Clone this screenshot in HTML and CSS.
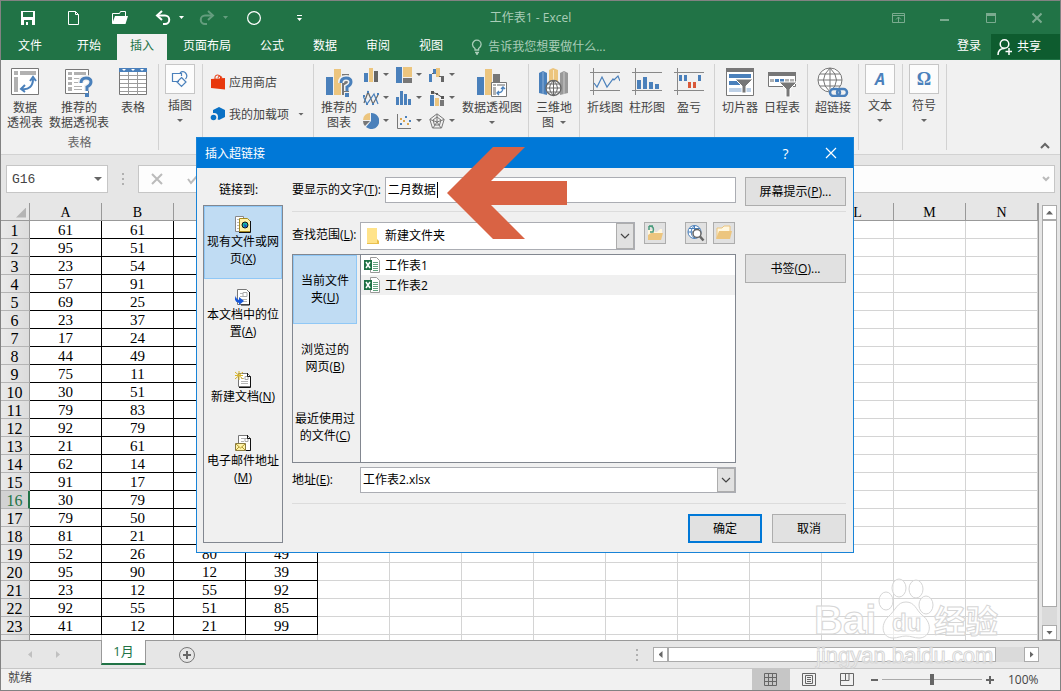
FILE: index.html
```html
<!DOCTYPE html>
<html lang="zh-CN">
<head>
    <meta charset="UTF-8">
    <meta name="viewport" content="width=device-width, initial-scale=1.0">
    <title>工作表1 - Excel</title>
    <link rel="stylesheet" href="styles.css">
</head>
<body>
    <div class="app">
        <header class="header">
            <div class="titlebar">
                <div class="quick">
                    <button class="quick-btn" aria-label="保存"><svg width="16" height="16" viewBox="0 0 16 16"><path d="M1 1h14v14H1z" fill="#fff"/><path d="M3 2h10v5H3zM4 10h8v5H4z" fill="#217346"/><path d="M6 12h2v3H6z" fill="#fff"/></svg></button>
                    <button class="quick-btn" aria-label="新建"><svg width="16" height="16" viewBox="0 0 16 16"><path d="M2.500 1.500h7l3 3v10h-10zM9.500 1.500v3h3" fill="none" stroke="#fff"/></svg></button>
                    <button class="quick-btn" aria-label="打开"><svg width="16" height="16" viewBox="0 0 16 16"><path d="M.5 13V3.500h7l1-2h5v5" fill="none" stroke="#fff"/><path d="M3 6h13l-2.500 8H0z" fill="#fff"/></svg></button>
                    <div class="history">
                        <button aria-label="撤销"><svg width="32" height="16" viewBox="0 0 32 16"><path d="M3 5.500h7a4.200 4.200 0 0 1 0 8.500H8" fill="none" stroke="#fff" stroke-width="2"/><path d="M7 1L2 5.500 7 10" fill="none" stroke="#fff" stroke-width="2"/><path d="M24 6h5l-2.500 3z" fill="#fff"/></svg></button>
                        <button class="dim" aria-label="恢复"><svg width="32" height="16" viewBox="0 0 32 16"><path d="M13 5.500H6A4.200 4.200 0 0 0 6 14h2" fill="none" stroke="#fff" stroke-width="2"/><path d="M9 1l5 4.500L9 10" fill="none" stroke="#fff" stroke-width="2"/><path d="M24 6h5l-2.500 3z" fill="#fff"/></svg></button>
                    </div>
                    <button class="quick-btn" aria-label="录制"><svg width="16" height="16" viewBox="0 0 16 16"><circle cx="8" cy="8" r="6.400" fill="none" stroke="#fff" stroke-width="1.200"/></svg></button>
                    <button class="quick-btn" aria-label="自定义"><svg width="16" height="16" viewBox="0 0 16 16"><path d="M5 5h5v1H5zM5 8h5l-2.500 3z" fill="#fff"/></svg></button>
                </div>
                <h1 class="title">工作表1 - Excel</h1>
                <div class="controls">
                    <button aria-label="功能区选项"><svg width="14" height="12" viewBox="0 0 14 12"><path d="M.5 1.500h12v9H.5zM1 3.500h12M6.500 10V5M4 7.500L6.500 5 9 7.500" fill="none" stroke="#7aab8f"/></svg></button>
                    <button aria-label="最小化"><svg width="10" height="12" viewBox="0 0 10 12"><path d="M0 7h9v2H0z" fill="#7aab8f"/></svg></button>
                    <button aria-label="最大化"><svg width="10" height="12" viewBox="0 0 10 12"><path d="M.5 1.500h9v9h-9z" fill="none" stroke="#7aab8f"/><path d="M0 1h10v3H0z" fill="#7aab8f"/></svg></button>
                    <button aria-label="关闭"><svg width="10" height="12" viewBox="0 0 10 12"><path d="M.5 1.500l9 9M9.500 1.500l-9 9" stroke="#7aab8f" stroke-width="2"/></svg></button>
                </div>
            </div>
            <nav class="tabs">
                <a class="tab file" href="#">文件</a>
                <a class="tab" href="#">开始</a>
                <a class="tab active" href="#">插入</a>
                <a class="tab" href="#">页面布局</a>
                <a class="tab" href="#">公式</a>
                <a class="tab" href="#">数据</a>
                <a class="tab" href="#">审阅</a>
                <a class="tab" href="#">视图</a>
                <a class="tell" href="#"><svg width="12" height="16" viewBox="0 0 12 16"><path d="M4 11V9.500C2.500 8.500 1.500 7.200 1.500 5.500a4.300 4.300 0 0 1 8.600 0c0 1.700-1 3-2.500 4V11zM4 13.500h4M5 15h2" fill="none" stroke="#a9cdb8" stroke-width="1.300"/></svg>告诉我您想要做什么...</a>
                <a class="login" href="#">登录</a>
                <button class="share"><svg width="16" height="18" viewBox="0 0 16 18"><circle cx="7.500" cy="6" r="4.300" fill="none" stroke="#fff" stroke-width="1.500"/><path d="M1 17c0-4 2.500-6.500 6.500-6.500M8.500 13.500H15M12 10v7" fill="none" stroke="#fff" stroke-width="1.500"/></svg>共享</button>
            </nav>
        </header>

        <div class="ribbon">
            <div class="group g-tables">
                <div class="group-items">
                    <button class="big"><svg width="28" height="30" viewBox="0 0 28 30"><path d="M.5 1.500h27v26H.5z" fill="#fff" stroke="#777"/><path d="M3 4h4v4H3zM9 4h16v4H9zM3 10h4v15H3z" fill="#b1b1b1"/><path d="M11 22c7 1 11-3 11-10M19 14l3-4 3 4M14 18l-4 4 4 3" fill="none" stroke="#4a80bb" stroke-width="2"/></svg>数据<br>透视表</button>
                    <button class="big wide"><svg width="28" height="30" viewBox="0 0 28 30"><path d="M.5 2.500h23v24H.5z" fill="#fff" stroke="#777"/><path d="M3 5h4v3H3zM9 5h12v3H9zM3 10h4v3H3zM3 15h4v3H3zM3 20h4v4H3zM9 11h9v1H9zM9 15h7v1H9zM9 19h8v1H9zM9 22h8v1H9z" fill="#b1b1b1"/><path d="M16 16q0-5 5-5t5 4q0 3-4 5v4" fill="none" stroke="#f1f1f1" stroke-width="6"/><path d="M16 16q0-5 5-5t5 4q0 3-4 5v4" fill="none" stroke="#4a80bb" stroke-width="3"/><path d="M20 26h4v4h-4z" fill="#4a80bb"/></svg>推荐的<br>数据透视表</button>
                    <button class="big"><svg width="28" height="30" viewBox="0 0 28 30"><path d="M.5 1.500h27v26H.5z" fill="#fff" stroke="#777"/><path d="M0 1h28v4H0z" fill="#4a80bb"/><path d="M3 2h4l-2 2zM12 2h4l-2 2zM21 2h4l-2 2z" fill="#fff"/><path d="M1 8.500h26M1 12.500h26M1 16.500h26M1 20.500h26M1 24.500h26M9.500 5v23M18.500 5v23" stroke="#9b9b9b"/></svg>表格</button>
                </div>
                <div class="group-name">表格</div>
            </div>
            <div class="group g-one">
                <button class="boxed"><span class="box"><svg width="18" height="18" viewBox="0 0 18 18"><path d="M8 11.500H1.500v-8h9V6M9 3c4-4 9 2 5.500 6M10.500 7.500L15 12l-4.500 4.500L6 12z" fill="none" stroke="#4a80bb" stroke-width="1.200"/></svg></span>插图<i class="caret"></i></button>
            </div>
            <div class="group g-addins">
                <button class="row-btn"><svg width="16" height="16" viewBox="0 0 16 16"><path d="M1 5l14-1v11.500L1 14z" fill="#e8380d"/><path d="M5 7V3q0-2 2.500-2t3 2v3M8 4q0-2 2-2t2 3" fill="none" stroke="#e8380d"/></svg>应用商店</button>
                <button class="row-btn"><svg width="16" height="16" viewBox="0 0 16 16"><path d="M9 1l6 3v7l-6 3-4-2V9L3 7V4z" fill="#0a71c5"/><circle cx="4" cy="11" r="4" fill="#f1f1f1"/><circle cx="3.500" cy="11.500" r="2.800" fill="#0a71c5"/></svg>我的加载项<i class="caret"></i></button>
            </div>
            <div class="group g-charts">
                <button class="big"><svg width="28" height="30" viewBox="0 0 28 30"><path d="M1 10h7v18H1z" fill="#4a80bb"/><path d="M9 2h7v26H9z" fill="#ecc57e"/><path d="M17 7h7v21h-7z" fill="#777"/><path d="M16 16q0-5 5-5t5 4q0 3-4 5v4M22 25v5" fill="none" stroke="#f1f1f1" stroke-width="6"/><path d="M16 16q0-5 5-5t5 4q0 3-4 5v4" fill="none" stroke="#4a80bb" stroke-width="3"/><path d="M20 26h4v4h-4z" fill="#4a80bb"/></svg>推荐的<br>图表</button>
                <div class="chart-grid">
                    <button aria-label="柱形图"><svg width="16" height="16" viewBox="0 0 16 16"><path d="M1 6h4v9H1z" fill="#4a80bb"/><path d="M6 1h4v14H6z" fill="#ecc57e"/><path d="M11 4h4v11h-4z" fill="#666"/></svg><i class="caret"></i></button>
                    <button aria-label="层次结构图"><svg width="16" height="16" viewBox="0 0 16 16"><path d="M0 0h6v16H0z" fill="#4a80bb"/><path d="M7 0h9v10H7z" fill="#ecc57e"/><path d="M7 11h9v5H7z" fill="#777"/></svg><i class="caret"></i></button>
                    <button aria-label="瀑布图"><svg width="16" height="16" viewBox="0 0 16 16"><path d="M0 7h3v8H0zM4 2h3v5H4z" fill="#4a80bb"/><path d="M7 1h4v9H7z" fill="#ecc57e"/><path d="M12 9h3v6h-3zM3 6h2v1H3zM10 9h4v1h-4z" fill="#666"/></svg><i class="caret"></i></button>
                    <button aria-label="折线图"><svg width="16" height="16" viewBox="0 0 16 16"><path d="M1 13L5 2l5 12 5-9" fill="none" stroke="#666" stroke-width="1.200"/><path d="M0 6l4 8 7-10 4 10" fill="none" stroke="#4a80bb" stroke-width="1.200"/><path d="M4 1h2v2H4zM14 3h2v2h-2zM0 5h2v2H0zM3 13h2v2H3zM9 13h2v2H9z" fill="#4a80bb"/></svg><i class="caret"></i></button>
                    <button aria-label="直方图"><svg width="16" height="16" viewBox="0 0 16 16"><path d="M0 7h3v8H0zM4 1h3v14H4zM8 4h3v11H8zM12 9h3v6h-3z" fill="#4a80bb"/></svg><i class="caret"></i></button>
                    <button aria-label="组合图"><svg width="16" height="16" viewBox="0 0 16 16"><path d="M1 5h4v11H1z" fill="#4a80bb"/><path d="M6 8h4v8H6z" fill="#ecc57e"/><path d="M11 10h4v6h-4z" fill="#777"/><path d="M3 2l5 2 6 4" fill="none" stroke="#555"/><path d="M2 1h3v3H2zM7 3h2v2H7zM12 6h3v3h-3z" fill="#555"/></svg><i class="caret"></i></button>
                    <button aria-label="饼图"><svg width="16" height="16" viewBox="0 0 16 16"><path d="M8 8V0a8 8 0 1 1-5 14z" fill="#4a80bb"/><path d="M7 7H0a7 7 0 0 1 7-7z" fill="#ecc57e"/><path d="M7 8l-5 5Q0 11 0 8z" fill="#777"/></svg><i class="caret"></i></button>
                    <button aria-label="散点图"><svg width="16" height="16" viewBox="0 0 16 16"><path d="M1.500 1v14.500H15" fill="none" stroke="#777"/><path d="M4 10h2v2H4zM9 3h2v2H9zM13 7h2v2h-2z" fill="#4a80bb"/><path d="M4 5h2v2H4zM7 7h2v2H7zM11 10h2v2h-2z" fill="#dba850"/></svg><i class="caret"></i></button>
                    <button aria-label="雷达图"><svg width="16" height="16" viewBox="0 0 16 16"><path d="M8 .8l7.200 5.500-2.700 8.700h-9L.8 6.300zM8 4l4 3-1.500 5h-5L4 7zM8 1v8M1 6.500L8 9l7-2.500M4 15l4-6 4 6" fill="none" stroke="#777"/></svg><i class="caret"></i></button>
                </div>
                <button class="big wide"><svg width="32" height="30" viewBox="0 0 32 30"><path d="M1 10h7v18H1z" fill="#4a80bb"/><path d="M9 2h7v26H9z" fill="#ecc57e"/><path d="M17 7h7v10h-7z" fill="#777"/><path d="M15.500 15.500h15v14h-15z" fill="#fff" stroke="#777"/><path d="M17 17h3v2h-3zM21 17h8v2h-8zM17 20h3v8h-3z" fill="#b1b1b1"/><path d="M21 26q6 0 6-5M25 22l2-2 2 2M23 24l-2 2 2 2" fill="none" stroke="#4a80bb" stroke-width="1.300"/></svg>数据透视图<i class="caret"></i></button>
            </div>
            <div class="group g-map">
                <button class="big"><svg width="30" height="30" viewBox="0 0 30 30"><path d="M0 6l4-2 4 2v22l-8-2z" fill="#4a80bb"/><path d="M10 3l4-2 5 2v20h-9z" fill="#ecc57e"/><path d="M21 6l4-2 4 2v20l-8 2z" fill="#999"/><path d="M4 5v22" stroke="#8fb1d6"/><path d="M25 5v22" stroke="#ccc"/><path d="M14.500 3v10" stroke="#f8e6c3"/><circle cx="14.500" cy="21" r="7.500" fill="#fff" stroke="#666" stroke-width="1.300"/><path d="M7 21h15M8.500 17h12M8.500 25h12M14.500 13.500v15M14.500 13.500q-8 7.500 0 15q8-7.500 0-15" fill="none" stroke="#666"/></svg>三维地<br><span class="inline">图<i class="caret"></i></span></button>
            </div>
            <div class="group g-spark">
                <button class="big"><svg width="30" height="30" viewBox="0 0 30 30"><path d="M0 5.500h30M0 23.500h30M3.500 1v27" stroke="#888"/><path d="M4 16l3 4 5-10 5 10 6-8 1 1 4-4 2 5" fill="none" stroke="#4a80bb" stroke-width="1.200"/></svg>折线图</button>
                <button class="big"><svg width="30" height="30" viewBox="0 0 30 30"><path d="M0 5.500h30M0 23.500h30M3.500 1v27" stroke="#888"/><path d="M5 13h4v9H5zM11 10h4v12h-4zM17 15h4v7h-4zM23 17h4v5h-4z" fill="#4a80bb"/></svg>柱形图</button>
                <button class="big"><svg width="30" height="30" viewBox="0 0 30 30"><path d="M0 5.500h30M0 23.500h30M3.500 1v27" stroke="#888"/><path d="M5 8h3v6H5zM10 8h3v6h-3zM24 8h3v6h-3z" fill="#4a80bb"/><path d="M14 15h3v6h-3zM19 15h3v6h-3z" fill="#d9593a"/></svg>盈亏</button>
            </div>
            <div class="group g-filter">
                <button class="big"><svg width="28" height="30" viewBox="0 0 28 30"><path d="M.5 1.500h27v27H.5z" fill="#fff" stroke="#777"/><path d="M0 1h28v4H0z" fill="#777"/><path d="M3 7h22v4H3zM3 14h12v4H3z" fill="#4a80bb"/><path d="M3 21h22v4H3z" fill="#bdd0e6"/><path d="M9 12h18l-7 7v7h-4v-7z" fill="#777" stroke="#fff"/></svg>切片器</button>
                <button class="big"><svg width="30" height="30" viewBox="0 0 30 30"><path d="M1.500 5.500h27v14h-27z" fill="#fff" stroke="#777"/><path d="M1 5h28v4H1z" fill="#777"/><path d="M3 12h4v3H3zM18 12h4v3h-4zM23 12h4v3h-4z" fill="#b1b1b1"/><path d="M8 12h4v3H8zM13 12h4v3h-4z" fill="#4a80bb"/><path d="M12 15h18l-7 7v8h-4v-8z" fill="#777" stroke="#fff"/></svg>日程表</button>
            </div>
            <div class="group g-link">
                <button class="big"><svg width="32" height="30" viewBox="0 0 32 30"><circle cx="13" cy="13" r="12" fill="#fff" stroke="#777"/><path d="M1 13h24M3 7h20M3 19h20M13 1v24M13 1q-13 12 0 24q13-12 0-24" fill="none" stroke="#777"/><rect x="12" y="21" width="19" height="9" rx="4" fill="#f1f1f1"/><rect x="13" y="22" width="10" height="7" rx="3.500" fill="none" stroke="#4a80bb" stroke-width="2.500"/><rect x="20" y="22" width="10" height="7" rx="3.500" fill="none" stroke="#4a80bb" stroke-width="2.500"/></svg>超链接</button>
            </div>
            <div class="group g-one">
                <button class="boxed"><span class="box letter-a">A</span>文本<i class="caret"></i></button>
            </div>
            <div class="group g-one">
                <button class="boxed"><span class="box omega">Ω</span>符号<i class="caret"></i></button>
            </div>
            <button class="collapse" aria-label="折叠功能区"><svg width="10" height="8" viewBox="0 0 10 8"><path d="M1 6l4-4 4 4" fill="none" stroke="#666" stroke-width="2"/></svg></button>
        </div>

        <div class="formula">
            <div class="name-box">
                <input type="text" value="G16" aria-label="名称框">
                <i class="caret"></i>
            </div>
            <svg class="dots" width="2" height="12" viewBox="0 0 2 12"><path d="M0 0h2v2H0zM0 5h2v2H0zM0 10h2v2H0z" fill="#b0b0b0"/></svg>
            <div class="fx-box">
                <svg width="12" height="12" viewBox="0 0 12 12"><path d="M1 1l10 10M11 1L1 11" stroke="#bbb" stroke-width="2"/></svg>
                <svg width="12" height="12" viewBox="0 0 12 12"><path d="M1 6l3 4 7-8" fill="none" stroke="#bbb" stroke-width="2"/></svg>
                <input type="text" aria-label="编辑栏">
                <svg width="8" height="6" viewBox="0 0 8 6"><path d="M1 1l3 3 3-3" fill="none" stroke="#bbb" stroke-width="2"/></svg>
            </div>
        </div>

        <div class="workspace">
            <div class="sheet">
                <table>
                    <thead>
                        <tr id="sheetHead"></tr>
                    </thead>
                    <tbody id="sheetBody"></tbody>
                </table>
            </div>
            <div class="vscroll">
                <button class="scroll-btn" aria-label="向上"><i class="up"></i></button>
                <div class="thumb"></div>
                <div class="track"></div>
                <button class="scroll-btn" aria-label="向下"><i class="down"></i></button>
            </div>
        </div>

        <div class="sheet-bar">
            <div class="sheet-nav">
                <i class="left"></i>
                <i class="right"></i>
            </div>
            <button class="sheet-tab">1月</button>
            <button class="add-sheet" aria-label="新工作表"><svg width="18" height="18" viewBox="0 0 18 18"><circle cx="9" cy="9" r="7.500" fill="none" stroke="#777"/><path d="M5 8h8v2H5zM8 5h2v8H8z" fill="#666"/></svg></button>
            <svg class="dots" width="2" height="12" viewBox="0 0 2 12"><path d="M0 0h2v2H0zM0 5h2v2H0zM0 10h2v2H0z" fill="#b0b0b0"/></svg>
            <div class="hscroll">
                <button class="scroll-btn" aria-label="向左"><i class="left"></i></button>
                <div class="thumb"></div>
                <div class="track"></div>
                <button class="scroll-btn" aria-label="向右"><i class="right"></i></button>
            </div>
        </div>

        <footer class="status">
            <span class="ready">就绪</span>
            <button class="view on" aria-label="普通"><svg width="14" height="14" viewBox="0 0 14 14"><path d="M.5.5h12v12H.5zM.5 4.500h12M.5 8.500h12M4.500.5v12M8.500.5v12" fill="none" stroke="#666"/></svg></button>
            <button class="view" aria-label="页面布局"><svg width="14" height="14" viewBox="0 0 14 14"><path d="M.5.500h13v12H.5zM3.500 2.500h7v8h-7zM5 4.500h4M5 6.500h4M5 8.500h4" fill="none" stroke="#666"/></svg></button>
            <button class="view" aria-label="分页预览"><svg width="14" height="14" viewBox="0 0 14 14"><path d="M.5.5h13v12H.5zM1 7.500h8V1M5.500 1v6" fill="none" stroke="#666"/></svg></button>
            <div class="zoom">
                <button class="minus" aria-label="缩小"></button>
                <input type="range" min="0" max="200" value="100" aria-label="缩放">
                <button class="plus" aria-label="放大"></button>
                <span>100%</span>
            </div>
        </footer>

        <div class="watermark">
            <svg width="200" height="98" viewBox="0 0 200 98">
                <g fill="#fff" fill-opacity=".6" stroke="#d6d6d6">
                    <text class="wm-bai" x="2" y="60">Bai</text>
                    <ellipse cx="74" cy="27" rx="7" ry="9"/>
                    <ellipse cx="87" cy="14" rx="7" ry="9"/>
                    <ellipse cx="104" cy="15" rx="7" ry="9"/>
                    <ellipse cx="114" cy="31" rx="7" ry="9"/>
                    <path d="M94 28c9 0 10 8 16 13 12 9 8 23-3 23-5 0-8-2-13-2s-8 2-13 2c-11 0-13-13-5-21 8-7 9-15 18-15z"/>
                    <text class="wm-du" x="80" y="57">du</text>
                    <text class="wm-cn" x="122" y="59">经验</text>
                    <text class="wm-url" x="4" y="89">jingyan.baidu.com</text>
                </g>
            </svg>
        </div>

        <div class="dialog" role="dialog" aria-labelledby="dlgTitle">
            <div class="dialog-title">
                <h2 id="dlgTitle">插入超链接</h2>
                <button class="help" aria-label="帮助">?</button>
                <button aria-label="关闭"><svg width="12" height="12" viewBox="0 0 12 12"><path d="M1 1l10 10M11 1L1 11" stroke="#fff" stroke-width="1.200"/></svg></button>
            </div>
            <div class="dialog-body">
                <div class="link-col">
                    <div class="link-label">链接到:</div>
                    <div class="link-list">
                        <button class="on"><svg width="16" height="17" viewBox="0 0 16 17"><path d="M.5.500h8v15h-8z" fill="#fff" stroke="#888"/><path d="M2 3.500h4M2 6.500h4M2 9.500h4M2 12.500h4" stroke="#bbb"/><path d="M4.500 2.500h8l3 3v10h-11z" fill="#fff3a8" stroke="#a88c20"/><circle cx="10" cy="9" r="3" fill="#15b0a8" stroke="#111"/><path d="M9 8l3 2-2 2z" fill="#1d3fd0"/><path d="M15.500 5v11.500H4" fill="none" stroke="#111"/></svg><span>现有文件或网<br>页(<u>X</u>)</span></button>
                        <button><svg width="16" height="17" viewBox="0 0 16 17"><path d="M2.500.500h9l3 3v12h-12z" fill="#fff" stroke="#777"/><path d="M5 4.500h4M5 7.500h6M5 10.500h7M8 12.500h4" stroke="#b5b5b5"/><path d="M8 3.500h4v4H8z" fill="#fff" stroke="#aaa"/><path d="M2 5q-3 4 2 6v-3l5 4-5 4v-2Q-3 12 2 5z" fill="#1858d8"/><path d="M14.500 3v13H6" fill="none" stroke="#111"/></svg><span>本文档中的位<br>置(<u>A</u>)</span></button>
                        <button><svg width="16" height="17" viewBox="0 0 16 17"><path d="M3.500 2.500h9l3 3v10h-12z" fill="#fff" stroke="#777"/><path d="M6 7.500h3M6 10.500h7M6 12.500h7" stroke="#b5b5b5"/><path d="M10 5.500h3v3h-3z" fill="#fff" stroke="#aaa"/><path d="M0 1l8 7M8 1L0 8M4 0v9M0 4.500h8" stroke="#d8b62a"/><path d="M12.500 2v3.500h3v11H4" fill="none" stroke="#111"/></svg><span>新建文档(<u>N</u>)</span></button>
                        <button><svg width="16" height="17" viewBox="0 0 16 17"><path d="M3.500.500h9l3 3v12h-12z" fill="#fff" stroke="#777"/><path d="M6 3.500h4M6 6.500h3" stroke="#b5b5b5"/><path d="M10 3.500h3v3h-3z" fill="#fff" stroke="#aaa"/><path d="M12.500 0v3.500h3v12H11" fill="none" stroke="#111"/><path d="M.5 8.500h10v7H.5z" fill="#fff3a8" stroke="#887a40"/><path d="M1 9l4.500 4L10 9M1 15l3-3M10 15l-3-3" fill="none" stroke="#b39a30"/></svg><span>电子邮件地址<br>(<u>M</u>)</span></button>
                    </div>
                </div>
                <div class="main-col">
                    <div class="line">
                        <label for="linkText">要显示的文字(<u>T</u>):</label>
                        <div class="field text-field"><input type="text" id="linkText" value="二月数据"></div>
                        <button class="btn side">屏幕提示(<u>P</u>)...</button>
                    </div>
                    <div class="rule"></div>
                    <div class="line">
                        <label class="fixed" for="lookIn">查找范围(<u>L</u>):</label>
                        <div class="field look">
                            <svg width="14" height="18" viewBox="0 0 14 18"><path d="M1 1h10v11l2 2v3H1z" fill="#e9c04f"/><path d="M1 1h10v15H1z" fill="#ffe38a"/></svg>
                            <select id="lookIn"><option>新建文件夹</option></select>
                            <span class="drop"><svg width="10" height="6" viewBox="0 0 10 6"><path d="M1 1l4 4 4-4" fill="none" stroke="#444" stroke-width="1.200"/></svg></span>
                        </div>
                        <div class="tools">
                            <button class="tool up-tool" aria-label="上一级"><svg width="18" height="18" viewBox="0 0 18 18"><path d="M2 6h5l2 2h2l3-3h2v6H2z" fill="#fff7e0"/><path d="M2 11l3-2h12l-2 7H2z" fill="#ecc57e"/><path d="M3 2h4M3 2v4M3 2q6 0 4 6H4" fill="none" stroke="#4a9b7c" stroke-width="1.500"/></svg></button>
                            <button class="tool" aria-label="浏览 Web"><svg width="18" height="18" viewBox="0 0 18 18"><circle cx="7.500" cy="8" r="6.500" fill="#fff" stroke="#4a80bb"/><path d="M1 8h13M2 4.500h11M7.500 1.500v13M7.500 1.500q-7 6.500 0 13" fill="none" stroke="#4a80bb"/><circle cx="10" cy="9.500" r="4" fill="#fff" stroke="#666" stroke-width="1.500"/><path d="M13 12.500l3.500 4" stroke="#666" stroke-width="2.500"/></svg></button>
                            <button class="tool" aria-label="浏览文件"><svg width="18" height="18" viewBox="0 0 18 18"><path d="M2 14V4h5l2-2h6v5" fill="#fff7e0" stroke="#ecc57e"/><path d="M4 7h13l-2 8H1z" fill="#ecc57e"/></svg></button>
                        </div>
                    </div>
                    <div class="line files">
                        <div class="places">
                            <button class="on">当前文件<br>夹(<u>U</u>)</button>
                            <button>浏览过的<br>网页(<u>B</u>)</button>
                            <button>最近使用过<br>的文件(<u>C</u>)</button>
                        </div>
                        <ul class="file-list">
                            <li><svg class="xls" width="16" height="16" viewBox="0 0 16 16"><path d="M6.500.500h6l3 3v12h-9z" fill="#fff" stroke="#999"/><path d="M9 5.500h5M9 7.500h5M9 9.500h5M9 11.500h5M9 13.500h5" stroke="#5fa27d"/><path d="M0 3h8v10H0z" fill="#1e7145"/><path d="M2 5l4 6M6 5l-4 6" stroke="#fff" stroke-width="1.500"/></svg>工作表1</li>
                            <li class="hover"><svg class="xls" width="16" height="16" viewBox="0 0 16 16"><path d="M6.500.500h6l3 3v12h-9z" fill="#fff" stroke="#999"/><path d="M9 5.500h5M9 7.500h5M9 9.500h5M9 11.500h5M9 13.500h5" stroke="#5fa27d"/><path d="M0 3h8v10H0z" fill="#1e7145"/><path d="M2 5l4 6M6 5l-4 6" stroke="#fff" stroke-width="1.500"/></svg>工作表2</li>
                        </ul>
                        <button class="btn side">书签(<u>O</u>)...</button>
                    </div>
                    <div class="line">
                        <label class="fixed" for="address">地址(<u>E</u>):</label>
                        <div class="field address">
                            <input type="text" id="address" value="工作表2.xlsx">
                            <span class="drop"><svg width="10" height="6" viewBox="0 0 10 6"><path d="M1 1l4 4 4-4" fill="none" stroke="#444" stroke-width="1.200"/></svg></span>
                        </div>
                    </div>
                    <div class="rule rule-last"></div>
                    <div class="actions">
                        <button class="btn primary">确定</button>
                        <button class="btn">取消</button>
                    </div>
                </div>
            </div>
            <svg class="arrow" width="120" height="92" viewBox="0 0 120 92"><path d="M0 46L46 0h32L44 34h76v24H44l34 34H46z" fill="#d96344"/></svg>
        </div>
    </div>

    <script src="script.js"></script>
</body>
</html>
```
FILE: styles.css
```css
* {
    box-sizing: border-box;
}
body {
    margin: 0;
    font-family: "Open Sans", "Noto Sans CJK SC", sans-serif;
    font-size: 12px;
    line-height: 15px;
    color: #444;
}
button, input, select {
    font: inherit;
    color: inherit;
    background: none;
    border: none;
    padding: 0;
    margin: 0;
    outline: none;
}
a {
    color: inherit;
    text-decoration: none;
}
svg {
    display: block;
    flex-shrink: 0;
}
.app {
    position: relative;
    display: flex;
    flex-direction: column;
    height: 100vh;
    border: 1px solid #828282;
    background: #e6e6e6;
    overflow: hidden;
}

/* title bar and tabs */
.header {
    background: #217346;
    color: #fff;
}
.titlebar {
    display: grid;
    grid-template-columns: 1fr auto 1fr;
    align-items: center;
    height: 33px;
}
.quick {
    display: flex;
    align-items: center;
    padding-left: 4px;
}
.quick-btn {
    width: 46px;
    display: flex;
    justify-content: center;
}
.history {
    display: flex;
    gap: 12px;
    margin-left: 12px;
}
.dim {
    opacity: 0.3;
}
.title {
    margin: 0;
    font-size: 12px;
    font-weight: normal;
    color: #a9cdb8;
}
.controls {
    display: flex;
    justify-content: flex-end;
}
.controls button {
    width: 46px;
    display: flex;
    justify-content: center;
}
.tabs {
    display: flex;
    gap: 3px;
    height: 26px;
    padding-left: 4px;
    line-height: 24px;
}
.tab {
    padding: 0 13px;
}
.file {
    margin-right: 6px;
}
.active {
    background: #f1f1f1;
    color: #217346;
}
.tell {
    display: flex;
    align-items: center;
    gap: 5px;
    margin-left: 12px;
    color: #a9cdb8;
}
.login {
    margin-left: auto;
    padding-right: 7px;
}
.share {
    display: flex;
    align-items: center;
    gap: 4px;
    width: 69px;
    height: 25px;
    padding-left: 6px;
    background: #0e5c2f;
}

/* ribbon */
.ribbon {
    display: flex;
    height: 95px;
    padding: 4px 0;
    background: #f1f1f1;
    border-bottom: 1px solid #d2d2d2;
}
.group {
    flex-shrink: 0;
    border-right: 1px solid #d2d2d2;
    display: flex;
}
.g-tables {
    width: 158px;
    flex-direction: column;
    justify-content: space-between;
}
.group-items {
    display: flex;
}
.group-name {
    text-align: center;
    color: #666;
}
.g-one {
    width: 44px;
    padding-left: 6px;
}
.g-addins {
    width: 111px;
    flex-direction: column;
    gap: 16px;
    padding: 10px 0 0 7px;
}
.g-charts {
    width: 215px;
    padding-left: 1px;
}
.g-map, .g-link {
    width: 51px;
}
.g-spark {
    width: 135px;
    padding-left: 4px;
}
.g-filter {
    width: 93px;
    padding-left: 4px;
}
.big {
    width: 48px;
    display: flex;
    flex-direction: column;
    align-items: center;
    padding-top: 3px;
    white-space: nowrap;
}
.big svg {
    margin-bottom: 3px;
}
.big .caret {
    margin-top: 6px;
}
.wide {
    width: 60px;
}
.g-spark .big, .g-filter .big {
    width: 42px;
}
.g-map .big, .g-link .big {
    width: 50px;
}
.inline {
    display: flex;
    gap: 6px;
}
.caret {
    flex-shrink: 0;
    width: 6px;
    height: 3px;
    background: #666;
    clip-path: polygon(0 0, 100% 0, 50% 100%);
}
.boxed {
    display: flex;
    flex-direction: column;
    align-items: center;
}
.boxed .caret {
    margin-top: 6px;
}
.box {
    width: 30px;
    height: 30px;
    display: flex;
    align-items: center;
    justify-content: center;
    margin-bottom: 4px;
    border: 1px solid #c6c6c6;
    background: #fcfcfc;
    color: #4a80bb;
    font-weight: bold;
}
.letter-a {
    font-size: 16px;
    font-style: italic;
}
.omega {
    font-family: "Liberation Serif", serif;
    font-size: 18px;
}
.row-btn {
    display: flex;
    align-items: center;
    gap: 3px;
}
.row-btn .caret {
    margin-left: 6px;
}
.chart-grid {
    display: grid;
    grid-template-columns: repeat(3, 33px);
    grid-auto-rows: 23px;
    margin-top: -1px;
}
.chart-grid button {
    display: flex;
    align-items: center;
    gap: 4px;
}
.collapse {
    margin-left: auto;
    align-self: flex-end;
    padding-right: 10px;
}

/* formula bar */
.formula {
    display: flex;
    align-items: center;
    gap: 14px;
    height: 48px;
    padding: 0 5px;
}
.name-box {
    width: 102px;
    height: 28px;
    display: flex;
    align-items: center;
    padding: 0 5px;
    border: 1px solid #c6c6c6;
    background: #fff;
}
.name-box input {
    flex: 1;
    min-width: 0;
    font-family: "Liberation Mono", monospace;
    font-size: 13px;
}
.name-box .caret {
    width: 8px;
    height: 4px;
}
.fx-box {
    flex: 1;
    height: 28px;
    display: flex;
    align-items: center;
    gap: 24px;
    padding: 0 4px 0 12px;
    border: 1px solid #c6c6c6;
    background: #fdfdfd;
}
.fx-box input {
    flex: 1;
}

/* sheet */
.workspace {
    flex: 1;
    min-height: 0;
    display: flex;
}
.sheet {
    flex: 1;
    overflow: hidden;
    border-right: 1px solid #999;
    background: #fff;
}
table {
    width: 1037px;
    table-layout: fixed;
    border-collapse: separate;
    border-spacing: 0;
    font-family: "Liberation Serif", serif;
    color: #000;
}
th, td {
    height: 18px;
    padding: 2px 0 0;
    text-align: center;
    line-height: 15px;
    border-right: 1px solid #d4d4d4;
    border-bottom: 1px solid #d4d4d4;
}
td {
    font-size: 15px;
}
th {
    border-right-color: #999;
    font-weight: normal;
}
thead th {
    border-bottom-color: #999;
    font-size: 14px;
    background: #e6e6e6;
}
tbody th {
    border-bottom-color: #b4b4b4;
    padding-right: 1px;
    font-size: 16px;
    background: linear-gradient(90deg, #eaeaea, #dcdcdc);
}
tbody th.current {
    padding-right: 0;
    background: #d2d2d2;
    color: #217346;
    border-right: 2px solid #217346;
}
.corner {
    width: 29px;
}
.corner::after {
    content: "";
    display: block;
    width: 10px;
    height: 10px;
    margin-left: 15px;
    background: #b4b4b4;
    clip-path: polygon(100% 0, 100% 100%, 0 100%);
}
.filled {
    border-color: #000;
}
.vscroll {
    width: 21px;
    display: flex;
    flex-direction: column;
    padding: 2px 3px 0;
}
.scroll-btn {
    width: 15px;
    height: 15px;
    flex-shrink: 0;
    display: flex;
    align-items: center;
    justify-content: center;
    border: 1px solid #ababab;
    background: #fff;
}
.thumb {
    border: 1px solid #ababab;
    background: #fff;
}
.track {
    background: #dadada;
}
.vscroll .thumb {
    flex: 388;
}
.vscroll .track {
    flex: 18;
}
.up, .down {
    width: 7px;
    height: 4px;
    background: #666;
    clip-path: polygon(0 0, 100% 0, 50% 100%);
}
.up {
    clip-path: polygon(0 100%, 100% 100%, 50% 0);
}
.left, .right {
    width: 4px;
    height: 7px;
    background: #666;
    clip-path: polygon(0 0, 100% 50%, 0 100%);
}
.left {
    clip-path: polygon(100% 0, 0 50%, 100% 100%);
}

/* sheet tabs */
.sheet-bar {
    display: flex;
    align-items: center;
    height: 28px;
    border-top: 1px solid #999;
}
.sheet-nav {
    width: 100px;
    display: flex;
    gap: 24px;
    padding-left: 27px;
}
.sheet-nav i {
    background: #c0c0c0;
}
.sheet-tab {
    align-self: flex-start;
    width: 45px;
    height: 25px;
    margin-top: -1px;
    border: 1px solid #999;
    border-top: none;
    border-bottom: 2px solid #217346;
    background: #fff;
    color: #217346;
    font-size: 13px;
}
.add-sheet {
    margin-left: 32px;
}
.sheet-bar .dots {
    margin-left: auto;
}
.hscroll {
    width: 386px;
    display: flex;
    margin: 0 21px 0 15px;
}
.hscroll .thumb {
    flex: 328;
}
.hscroll .track {
    flex: 28;
}

/* status bar */
.status {
    display: flex;
    height: 22px;
    border-top: 1px solid #c6c6c6;
    background: #f1f1f1;
    line-height: 18px;
}
.ready {
    flex: 1;
    padding-left: 7px;
}
.view {
    width: 38px;
    display: flex;
    align-items: center;
    justify-content: center;
}
.on.view {
    background: #c6c6c6;
}
.zoom {
    display: flex;
    align-items: center;
    padding: 0 19px 0 4px;
}
.zoom span {
    width: 33px;
    margin-left: 14px;
}
.minus, .plus {
    width: 8px;
    height: 8px;
    background: linear-gradient(#666, #666) center / 7px 2px no-repeat;
}
.plus {
    background: linear-gradient(#666, #666) center / 8px 2px no-repeat, linear-gradient(#666, #666) center / 2px 8px no-repeat;
}
.zoom input {
    -webkit-appearance: none;
    appearance: none;
    width: 100px;
    height: 12px;
    margin: 0 4px;
    background: linear-gradient(#aaa, #aaa) center / 100% 1px no-repeat;
}
.zoom input::-webkit-slider-thumb {
    -webkit-appearance: none;
    width: 4px;
    height: 11px;
    background: #666;
}

/* watermark over the grid */
.watermark {
    position: absolute;
    right: 48px;
    bottom: 18px;
}
.watermark text {
    font-family: "Liberation Sans", "Noto Sans CJK SC", sans-serif;
    font-weight: bold;
}
.wm-bai {
    font-size: 40px;
}
.wm-du {
    font-size: 24px;
}
.watermark .wm-cn {
    font-size: 32px;
}
.watermark .wm-url {
    font-size: 22px;
    font-weight: normal;
}

/* dialog */
.dialog {
    position: absolute;
    left: 195px;
    top: 136px;
    width: 658px;
    border: 1px solid #1883d7;
    background: #f0f0f0;
    color: #000;
}
.dialog-title {
    display: flex;
    align-items: center;
    height: 30px;
    padding-left: 8px;
    background: #0078d7;
    color: #fff;
}
.dialog-title h2 {
    flex: 1;
    margin: 0;
    font-size: 12px;
    font-weight: normal;
}
.dialog-title button {
    width: 45px;
    display: flex;
    justify-content: center;
}
.dialog-title .help {
    font-size: 14px;
}
.dialog-body {
    display: flex;
    gap: 9px;
    padding: 9px 7px 9px 6px;
}
.link-col {
    width: 80px;
    display: flex;
    flex-direction: column;
}
.link-label {
    height: 28px;
    padding-left: 16px;
    line-height: 26px;
}
.link-list {
    flex: 1;
    display: flex;
    flex-direction: column;
    border: 1px solid #828790;
}
.link-list button {
    height: 73px;
    display: flex;
    flex-direction: column;
    align-items: center;
    justify-content: center;
    padding-bottom: 2px;
    line-height: 17px;
    white-space: nowrap;
    border: 1px solid transparent;
}
.link-list .on, .places .on {
    background: #c0dcf3;
    border-color: #90c8f6;
}
.main-col {
    flex: 1;
    display: flex;
    flex-direction: column;
}
.line {
    display: flex;
    align-items: flex-start;
}
.line label {
    line-height: 26px;
    white-space: nowrap;
}
.line .fixed {
    width: 68px;
}
.field {
    flex: 1;
    height: 26px;
    display: flex;
    align-items: center;
    border: 1px solid #abadb3;
    background: #fff;
}
.field input, .field select {
    flex: 1;
    min-width: 0;
    padding: 0 2px 2px;
    appearance: none;
}
.text-field {
    margin-left: 4px;
}
.text-field input {
    background: linear-gradient(#000, #000) 51px 0 / 1px 16px no-repeat;
}
.btn {
    width: 74px;
    height: 29px;
    border: 1px solid #adadad;
    background: #e1e1e1;
}
.side {
    width: 101px;
    margin-left: 9px;
}
.primary {
    border: 2px solid #0078d7;
}
.rule {
    height: 1px;
    margin: 5px 0 10px;
    background: #dcdcdc;
}
.rule-last {
    margin-top: 10px;
}
.look {
    height: 28px;
    padding-left: 5px;
}
.look select {
    padding-left: 5px;
}
.drop {
    align-self: stretch;
    width: 18px;
    display: flex;
    align-items: center;
    justify-content: center;
    border: 1px solid #adadad;
    background: #e1e1e1;
}
.tools {
    display: flex;
    gap: 6px;
    width: 211px;
    padding-left: 9px;
}
.tool {
    width: 22px;
    height: 22px;
    display: flex;
    align-items: center;
    justify-content: center;
    border: 1px solid #adadad;
    background: #e1e1e1;
}
.up-tool {
    margin-right: 13px;
}
.files {
    height: 209px;
    margin: 4px 0;
    align-items: stretch;
}
.files .btn {
    align-self: flex-start;
}
.places {
    width: 68px;
    display: flex;
    flex-direction: column;
    border: 1px solid #828790;
    border-right: none;
}
.places button {
    height: 69px;
    padding-bottom: 2px;
    line-height: 17px;
    white-space: nowrap;
    border: 1px solid transparent;
    margin-right: 3px;
}
.file-list {
    flex: 1;
    margin: 0;
    padding: 0;
    list-style: none;
    border: 1px solid #828790;
    background: #fff;
}
.file-list li {
    display: flex;
    align-items: center;
    gap: 5px;
    height: 20px;
    padding-left: 3px;
}
.hover {
    background: #f0f0f0;
}
.address {
    margin-right: 110px;
}
.actions {
    display: flex;
    justify-content: flex-end;
    gap: 10px;
}
.arrow {
    position: absolute;
    left: 250px;
    top: 9px;
}
```
FILE: script.js
```js
const columns = "ABCDEFGHIJKLMN".split("");

// one entry per sheet row, columns A to D
const data = [
    [61, 61], [95, 51], [23, 54], [57, 91], [69, 25], [23, 37],
    [17, 24], [44, 49], [75, 11], [30, 51], [79, 83], [92, 79],
    [21, 61], [62, 14], [91, 17], [30, 79], [79, 50], [81, 21],
    [52, 26, 80, 49], [95, 90, 12, 39], [23, 12, 55, 92],
    [92, 55, 51, 85], [41, 12, 21, 99], null
];

document.getElementById("sheetHead").innerHTML =
    '<th class="corner"></th>' + columns.map(c => `<th>${c}</th>`).join("");

let body = document.getElementById("sheetBody");
data.forEach((values, index) => {
    let row = document.createElement("tr");
    let current = index === 15 ? ' class="current"' : "";
    let cells = columns.map((c, i) => {
        if (!values || i > 3) return "<td></td>";
        return `<td class="filled">${values[i] ?? ""}</td>`;
    });
    row.innerHTML = `<th${current}>${values ? index + 1 : ""}</th>` + cells.join("");
    body.appendChild(row);
});
```
